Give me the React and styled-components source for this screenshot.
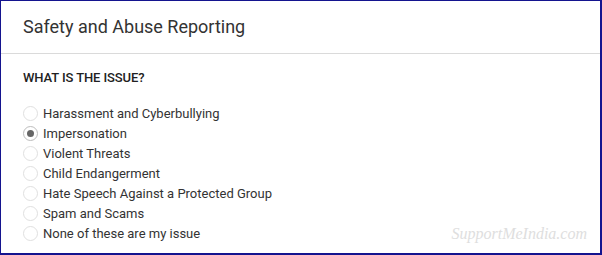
import React, { useState } from 'react';
import styled, { createGlobalStyle } from 'styled-components';

const GlobalStyle = createGlobalStyle`
    html, body {
        margin: 0;
        padding: 0;
        background: #fff;
    }
    body {
        font-family: Roboto, 'Liberation Sans', sans-serif;
    }
`;

const Frame = styled.div`
    position: relative;
    box-sizing: border-box;
    width: 602px;
    height: 255px;
    background: #fff;
    border-style: solid;
    border-color: #14148f;
    border-width: 1px 2px 2px 1px;
    overflow: hidden;
`;

const Header = styled.header`
    box-sizing: border-box;
    height: 53px;
    display: flex;
    align-items: center;
    padding: 0 22px;
    border-bottom: 1px solid #dadada;
`;

const Title = styled.h1`
    margin: 0 0 2px;
    font-size: 18px;
    font-weight: 400;
    color: #333;
`;

const Body = styled.section`
    padding: 15px 22px 0;
`;

const Question = styled.h2`
    margin: 0 0 16px;
    font-size: 13px;
    font-weight: 500;
    color: #212121;
    line-height: 18px;
    letter-spacing: -0.1px;
`;

const Options = styled.div`
    display: flex;
    flex-direction: column;
`;

const Option = styled.label`
    display: flex;
    align-items: center;
    gap: 5px;
    height: 20px;
    font-size: 13px;
    color: #333;
    cursor: pointer;
`;

const Radio = styled.span`
    box-sizing: border-box;
    width: 15px;
    height: 15px;
    border-radius: 50%;
    border: 1px solid ${(p) => (p.$checked ? '#bdbdbd' : '#e0e0e0')};
    display: flex;
    align-items: center;
    justify-content: center;

    &::after {
        content: '';
        width: 7px;
        height: 7px;
        border-radius: 50%;
        background: ${(p) => (p.$checked ? '#666' : 'transparent')};
    }
`;

const Watermark = styled.div`
    position: absolute;
    right: 13px;
    bottom: 10px;
    font-family: 'Liberation Serif', serif;
    font-style: italic;
    font-size: 16px;
    color: #dedede;
    pointer-events: none;
`;

const issues = [
    'Harassment and Cyberbullying',
    'Impersonation',
    'Violent Threats',
    'Child Endangerment',
    'Hate Speech Against a Protected Group',
    'Spam and Scams',
    'None of these are my issue',
];

const App = () => {
    const [selected, setSelected] = useState(1);

    return (
        <>
            <GlobalStyle />
            <Frame>
                <Header>
                    <Title>Safety and Abuse Reporting</Title>
                </Header>
                <Body>
                    <Question>WHAT IS THE ISSUE?</Question>
                    <Options>
                        {issues.map((issue, i) => (
                            <Option key={issue} onClick={() => setSelected(i)}>
                                <Radio $checked={selected === i} />
                                {issue}
                            </Option>
                        ))}
                    </Options>
                </Body>
                <Watermark>SupportMeIndia.com</Watermark>
            </Frame>
        </>
    );
};

export default App;
